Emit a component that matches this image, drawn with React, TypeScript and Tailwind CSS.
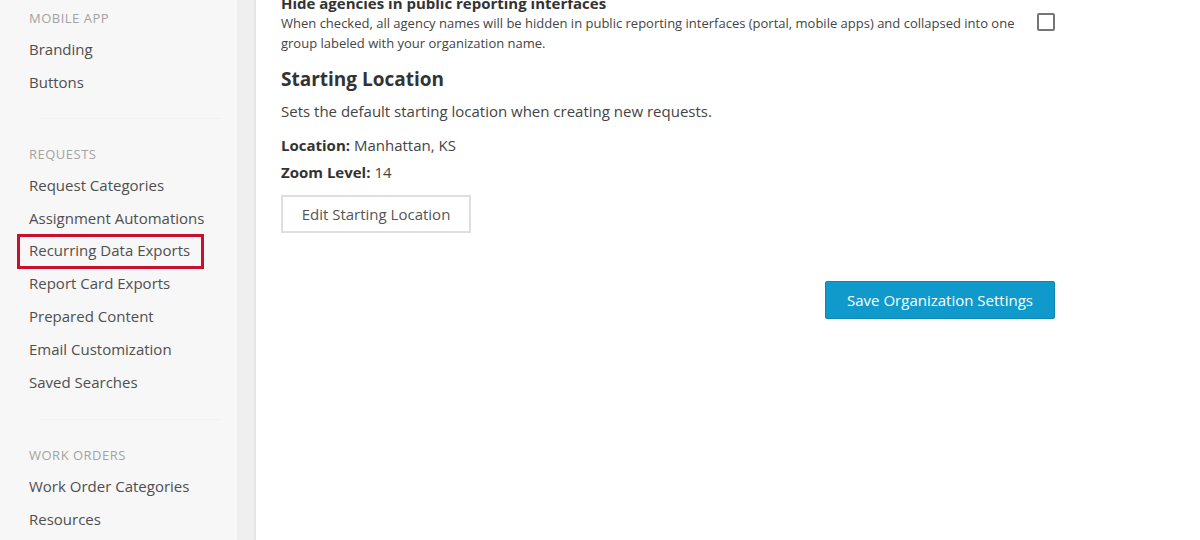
const font = { fontFamily: '"Open Sans", "Noto Sans", sans-serif' }

type NavSection = { title: string; items: string[] }

const sections: NavSection[] = [
  { title: 'Mobile App', items: ['Branding', 'Buttons'] },
  {
    title: 'Requests',
    items: [
      'Request Categories',
      'Assignment Automations',
      'Recurring Data Exports',
      'Report Card Exports',
      'Prepared Content',
      'Email Customization',
      'Saved Searches',
    ],
  },
  { title: 'Work Orders', items: ['Work Order Categories', 'Resources'] },
]

function Sidebar() {
  return (
    <aside className="flex shrink-0">
      <nav className="w-[237px] bg-[#f7f7f7] pt-2">
        {sections.map((section, i) => (
          <div key={section.title}>
            {i > 0 && (
              <div
                className={
                  i === 1
                    ? 'ml-10 mr-[17px] mt-[19px] mb-[25px] h-px bg-[#f1f1f1]'
                    : 'ml-10 mr-[17px] mt-[21px] mb-[25px] h-px bg-[#f1f1f1]'
                }
              />
            )}
            <div className="h-5 pl-[29px] text-[13px] leading-5 uppercase tracking-[0.5px] text-[#a3a3a3] mb-[5px]">
              {section.title}
            </div>
            {section.items.map((item) => (
              <div key={item} className="relative flex h-[32.8px] items-center pl-[29px] text-[15px] text-[#4f4f4f]">
                {item}
                {item === 'Recurring Data Exports' && (
                  <span className="pointer-events-none absolute left-[17px] top-[0px] h-[35px] w-[187px] border-[3px] border-[#c8102e]" />
                )}
              </div>
            ))}
          </div>
        ))}
      </nav>
      <div className="w-[17px] bg-[#efefef]" />
      <div className="w-[2px] bg-[#e6e6e6]" />
    </aside>
  )
}

function Checkbox() {
  return <span className="block h-[18px] w-[18px] shrink-0 rounded-[2px] border-2 border-[#767676] bg-white" />
}

export default function App() {
  return (
    <div style={font} className="flex h-[540px] w-[1200px] overflow-hidden bg-white text-[#333]">
      <Sidebar />
      <main className="pl-[25px]">
        <div className="w-[774px]">
          <div className="-mt-[7px] text-[15px] font-bold leading-5 text-[#333]">
            Hide agencies in public reporting interfaces
          </div>
          <div className="flex items-start">
            <p className="flex-1 pr-[14px] text-[13px] leading-5 text-[#444]">
              When checked, all agency names will be hidden in public reporting interfaces (portal, mobile apps) and
              collapsed into one group labeled with your organization name.
            </p>
            <Checkbox />
          </div>

          <h2 className="mt-[13px] text-[19px] font-bold leading-[26px] text-[#333]">Starting Location</h2>
          <p className="mt-2 text-[15px] leading-[22px] text-[#444]">
            Sets the default starting location when creating new requests.
          </p>
          <p className="mt-3 text-[15px] leading-[22px] text-[#444]">
            <span className="font-bold text-[#333]">Location:</span> Manhattan, KS
          </p>
          <p className="mt-[5px] text-[15px] leading-[22px] text-[#444]">
            <span className="font-bold text-[#333]">Zoom Level:</span> 14
          </p>
          <button className="mt-3 h-[38px] w-[190px] border-2 border-[#dedede] bg-white text-[15px] text-[#555]">
            Edit Starting Location
          </button>

          <div className="mt-[48px] flex justify-end">
            <button className="h-[38px] w-[230px] rounded-[2px] border border-[#0c86b3] bg-[#0f9acb] text-[15px] text-white">
              Save Organization Settings
            </button>
          </div>
        </div>
      </main>
    </div>
  )
}
